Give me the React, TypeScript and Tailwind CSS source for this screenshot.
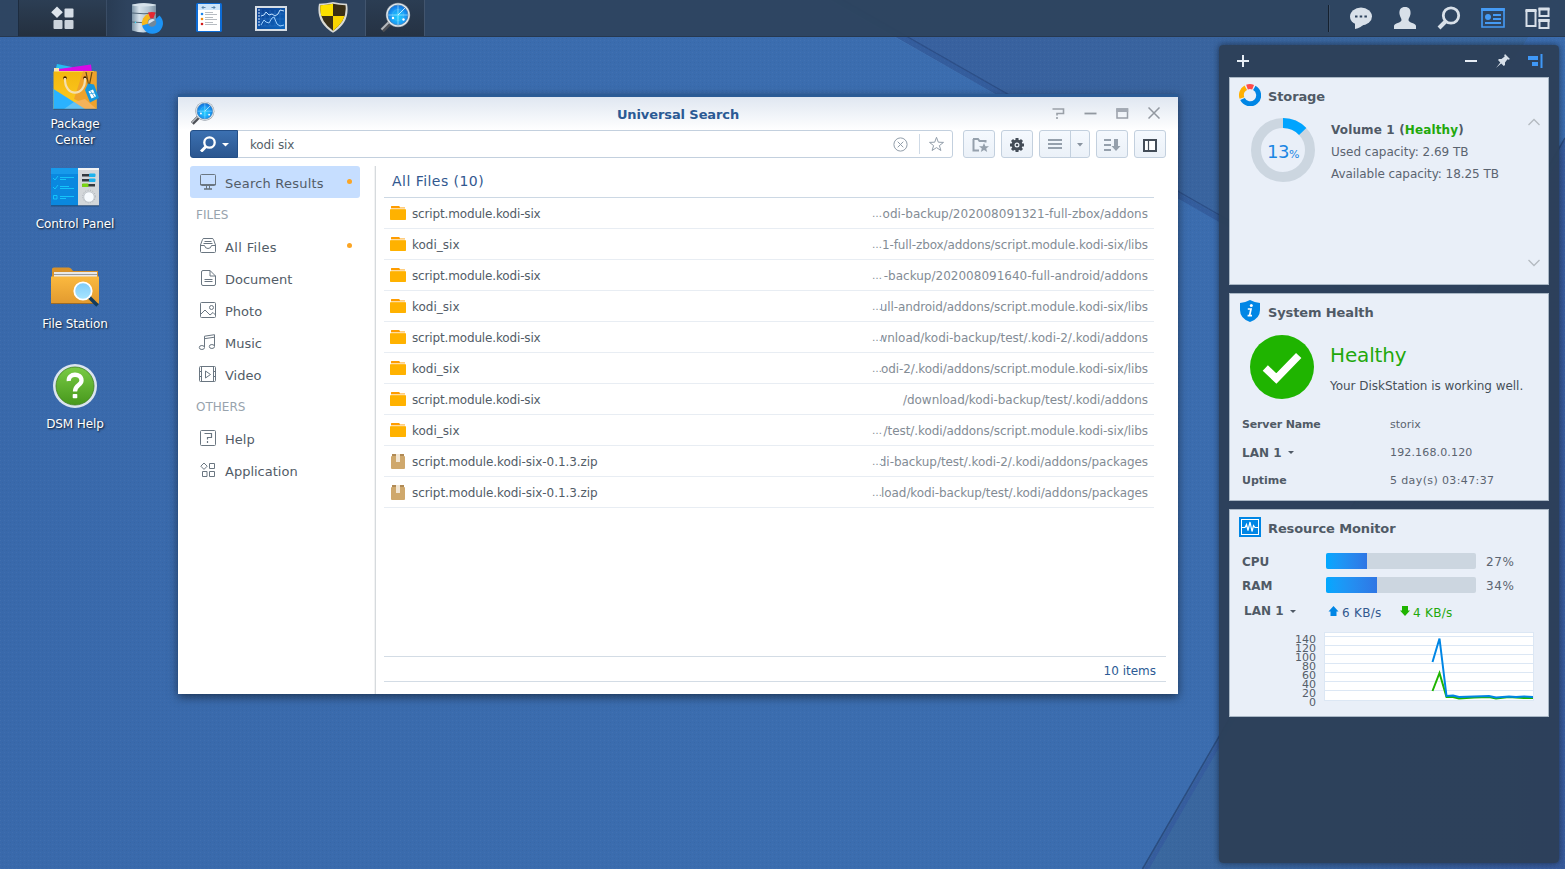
import React from "react";

const FOLDER = "folder";
const ZIP = "zip";

const LIBS = "tracking-[-0.09px]";
const results = [
  { icon: FOLDER, name: "script.module.kodi-six", cut: true, fit: "tracking-[0.02px]", path: "odi-backup/202008091321-full-zbox/addons" },
  { icon: FOLDER, name: "kodi_six", cut: true, fit: "tracking-[-0.11px]", path: "1-full-zbox/addons/script.module.kodi-six/libs" },
  { icon: FOLDER, name: "script.module.kodi-six", cut: true, fit: "tracking-[0.01px]", path: "-backup/202008091640-full-android/addons" },
  { icon: FOLDER, name: "kodi_six", cut: true, fit: LIBS, path: "ull-android/addons/script.module.kodi-six/libs" },
  { icon: FOLDER, name: "script.module.kodi-six", cut: true, fit: "tracking-[-0.03px]", path: "wnload/kodi-backup/test/.kodi-2/.kodi/addons" },
  { icon: FOLDER, name: "kodi_six", cut: true, fit: LIBS, path: "odi-2/.kodi/addons/script.module.kodi-six/libs" },
  { icon: FOLDER, name: "script.module.kodi-six", cut: false, fit: "tracking-[-0.03px]", path: "/download/kodi-backup/test/.kodi/addons" },
  { icon: FOLDER, name: "kodi_six", cut: true, fit: "tracking-[-0.08px]", path: "/test/.kodi/addons/script.module.kodi-six/libs" },
  { icon: ZIP, name: "script.module.kodi-six-0.1.3.zip", cut: true, fit: "tracking-[-0.06px]", path: "di-backup/test/.kodi-2/.kodi/addons/packages" },
  { icon: ZIP, name: "script.module.kodi-six-0.1.3.zip", cut: true, fit: "tracking-[-0.09px]", path: "load/kodi-backup/test/.kodi/addons/packages" },
];

function Wallpaper() {
  return (
    <svg className="absolute inset-0" width="1565" height="869" viewBox="0 0 1565 869">
      <defs>
        <linearGradient id="wpBase" x1="0" y1="0" x2="1" y2="0">
          <stop offset="0" stopColor="#3969ab" />
          <stop offset="0.5" stopColor="#3b6daf" />
          <stop offset="1" stopColor="#3b6cae" />
        </linearGradient>
        <linearGradient id="wpTop" x1="0" y1="0" x2="1" y2="0">
          <stop offset="0" stopColor="#38609f" />
          <stop offset="1" stopColor="#3a689f" />
        </linearGradient>
        <linearGradient id="wpRight" x1="0" y1="0" x2="1" y2="0">
          <stop offset="0" stopColor="#3a689f" />
          <stop offset="1" stopColor="#375a9b" />
        </linearGradient>
        <pattern id="wpDots" width="4" height="4" patternUnits="userSpaceOnUse">
          <rect x="0" y="0" width="1" height="1" fill="#fff" opacity="0.035" />
          <rect x="2" y="2" width="1" height="1" fill="#000" opacity="0.04" />
        </pattern>
      </defs>
      <rect width="1565" height="869" fill="url(#wpBase)" />
      <path d="M838 0 L1360 298 L1565 -20 V0Z" fill="url(#wpTop)" />
      <path d="M1142 869 L1220 735 L1565 138 V869Z" fill="url(#wpRight)" />
      <path d="M830 0 L1350 295" stroke="#4a7ab5" strokeWidth="1" fill="none" opacity=".6" />
      <path d="M831 0 L842 0 L1362 298 L1352 298Z" fill="#345d9d" />
      <path d="M843 0 L1363 297" stroke="#2c4f88" strokeWidth="1.4" fill="none" />
      <path d="M1144 869 L1566 139 L1566 146 L1149 869Z" fill="#365d9e" />
      <path d="M1142.500 869 L1565 138" stroke="#2a4c80" strokeWidth="1.500" fill="none" />
      <rect width="1565" height="869" fill="url(#wpDots)" />
    </svg>
  );
}

/* ---------- application icons ---------- */

function SearchAppIcon({ size, id }: { size: number; id: string }) {
  return (
    <svg width={size} height={size} viewBox="0 0 32 32">
      <defs>
        <radialGradient id={id} cx=".5" cy=".6" r=".6">
          <stop offset="0" stopColor="#1fd0ff" />
          <stop offset=".6" stopColor="#1a9cf5" />
          <stop offset="1" stopColor="#0f6fdd" />
        </radialGradient>
      </defs>
      <path d="M11.500 20 L3 28.500" stroke="#4c4f55" strokeWidth="5" />
      <path d="M10.500 19.500 L2.500 27.500" stroke="#b5b9be" strokeWidth="1.800" />
      <circle cx="19" cy="13" r="12.200" fill="#8d969f" />
      <circle cx="19" cy="13" r="11.600" fill="#e4e8ec" />
      <circle cx="19" cy="13" r="10" fill={`url(#${id})`} stroke="#3c7cae" strokeWidth=".7" />
      <circle cx="19" cy="13" r="5.500" fill="none" stroke="#7fe0ff" strokeWidth=".6" opacity=".4" />
      <path d="M19 3 V23 M9 13 H29" stroke="#c8f4ff" strokeWidth=".9" opacity=".6" />
      <path d="M19 13 L26 6" stroke="#e8fbff" strokeWidth="1" opacity=".8" />
      <circle cx="14" cy="16" r="1.200" fill="#fff" />
      <circle cx="24.500" cy="17.500" r="1.200" fill="#fff" />
    </svg>
  );
}

function StorageManagerIcon() {
  return (
    <svg width="32" height="32" viewBox="0 0 32 32">
      <defs>
        <linearGradient id="cyl" x1="0" x2="1">
          <stop offset="0" stopColor="#7d95a8" />
          <stop offset=".3" stopColor="#d7e3ec" />
          <stop offset=".7" stopColor="#b0c3d1" />
          <stop offset="1" stopColor="#7c91a3" />
        </linearGradient>
      </defs>
      <path d="M1 2.500 Q13 -.5 25 2.500 V28 Q13 32.500 1 28.500Z" fill="url(#cyl)" />
      <ellipse cx="13" cy="3" rx="12" ry="1.500" fill="#d6e2eb" />
      <path d="M1 11 Q13 12.500 25 11 M1 20 Q13 21.500 25 20" stroke="#516779" strokeWidth="1" fill="none" />
      <circle cx="4.500" cy="20.500" r=".7" fill="#3ae2ff" />
      <path d="M21 20.500 L28.500 13.500 A10.500 10.500 0 1 1 11 22Z" fill="#1c93f5" />
      <path d="M21 20.500 L11 23.500 A11 11 0 0 1 17.500 11.500Z" fill="#f6b71d" />
      <path d="M21 20.500 L17 10.500 Q21 9.500 24.500 10.500Z" fill="#e42832" />
      <circle cx="21" cy="20.500" r="4.300" fill="#71889b" />
      <path d="M17.500 22 A4 4 0 0 1 24 18Z" fill="#d7e3ec" />
    </svg>
  );
}

function LogIcon() {
  return (
    <svg width="26" height="30" viewBox="0 0 26 30">
      <rect x="0" y="0" width="26" height="29" rx="1.500" fill="#0d6cd6" />
      <rect x="2" y="1" width="22" height="27" fill="#fff" />
      <rect x="2" y="1" width="22" height="6" fill="#cfe5fa" />
      <path d="M6 4.500 H9.500 M15.500 4.500 H19 M7.500 3 L6 4.500 L7.500 6 M17.500 3 L19 4.500 L17.500 6" stroke="#41729f" strokeWidth=".8" fill="none" />
      <circle cx="6" cy="11" r="1.300" fill="#1a85ee" />
      <circle cx="6" cy="16" r="1.300" fill="#f28c13" />
      <circle cx="6" cy="21" r="1.300" fill="#d31b1b" />
      <path d="M9 9.500 H17 M9 11.500 H21 M9 14.500 H17 M9 16.500 H21 M9 19.500 H17 M9 21.500 H21" stroke="#b7bcc2" />
    </svg>
  );
}

function MonitorIcon() {
  return (
    <svg width="32" height="25" viewBox="0 0 32 25">
      <defs>
        <linearGradient id="mon" x1="0" y1="0" x2="1" y2="1">
          <stop offset="0" stopColor="#0e3f8f" />
          <stop offset="1" stopColor="#0b66bf" />
        </linearGradient>
      </defs>
      <rect width="32" height="25" fill="#d6dde4" />
      <rect x="2" y="2" width="28" height="21" fill="url(#mon)" />
      <path d="M6 3 V20 H29 M10 20 V4 M15 20 V4 M20 20 V4 M25 20 V4 M6 8 H29 M6 13 H29" stroke="#3b7fca" strokeWidth=".7" fill="none" opacity=".6" />
      <path d="M3 4 H5 M3 7 H5 M3 10 H5 M3 13 H5 M3 16 H5 M3 19 H5" stroke="#dcecff" strokeWidth="1" />
      <path d="M6 10 L9 9 L11 6 L14 9 L17 8 L20 10 L23 8 L25 4 L29 5" stroke="#bfe0ff" fill="none" strokeWidth="1" />
      <path d="M6 19 L9 14 L11 16 L14 17 L17 12 L19 11 L22 18 L25 20 L29 19" stroke="#9cd0ff" fill="none" strokeWidth="1" />
    </svg>
  );
}

function ShieldIcon() {
  return (
    <svg width="32" height="31" viewBox="0 0 32 31">
      <defs>
        <clipPath id="sh">
          <path d="M16 1.800 Q22 3 28.500 3.200 Q30.500 18 16 28.800 Q1.500 18 3.500 3.200 Q10 3 16 1.800Z" />
        </clipPath>
      </defs>
      <path d="M16 0 Q23 1.500 30 1.800 Q33.500 20 16 30.800 Q-1.500 20 2 1.800 Q9 1.500 16 0Z" fill="#dadad4" />
      <g clipPath="url(#sh)">
        <rect width="32" height="31" fill="#3a2f16" />
        <rect width="16" height="14" fill="#fce000" />
        <rect x="16" y="14" width="16" height="17" fill="#f9d400" />
      </g>
    </svg>
  );
}

function PackageIcon() {
  return (
    <svg width="48" height="48" viewBox="0 0 48 48" className="relative top-px left-px">
      <defs>
        <linearGradient id="bag" x1="0" y1="0" x2="0" y2="1">
          <stop offset="0" stopColor="#f3b70f" />
          <stop offset="1" stopColor="#fecb22" />
        </linearGradient>
      </defs>
      <path d="M5 0 L20 3 L18 9 L3 8Z" fill="#25bdf0" />
      <path d="M7 5 L39 .5 L40 9 L7 8Z" fill="#d80ae6" />
      <path d="M2 4 H7 V7 H42 V9 H2Z" fill="#f7e5b4" />
      <rect x="1.500" y="7.500" width="43" height="37.500" fill="url(#bag)" />
      <path d="M31 7.500 L22 35 L44.500 45 V7.500Z" fill="#eea22b" />
      <path d="M1.500 25 L33 45 H1.500Z" fill="#2ab2ff" />
      <path d="M22 38 L33 35 L44.500 45 H32Z" fill="#f5b35a" />
      <path d="M22 38 L33 45 H12Z" fill="#63c2f4" />
      <path d="M1.500 45.300 H44.500" stroke="#34597c" strokeWidth="1" />
      <circle cx="13" cy="14" r="1.800" fill="#3a1b00" />
      <circle cx="33" cy="14" r="1.800" fill="#3a1b00" />
      <path d="M13 14 C12 33.500 34 33.500 33 14" fill="none" stroke="#f4dfaf" strokeWidth="2.200" />
      <path d="M34 8 L37 23 L40 8" stroke="#6b4a10" strokeWidth="1.200" fill="none" />
      <path d="M36 19.500 L42 20.500 L47 34 L38 38.500 L33 26Z" fill="#1597dd" />
      <path d="M36.500 27.500 L41 25.500 L44 32.500 L39.500 34.500Z" fill="#fff" />
      <path d="M38.500 27 L42.500 33 M36.500 30 L43 29" stroke="#1597dd" strokeWidth=".7" />
    </svg>
  );
}

function ControlPanelIcon() {
  return (
    <svg width="48" height="39" viewBox="0 0 48 39">
      <rect width="27" height="38" fill="#0a88df" />
      <rect width="27" height="6" fill="#179aeb" />
      <rect x="27" width="21" height="38" fill="#d3d7da" />
      <rect x="27" width="21" height="2" fill="#f2f3f4" />
      <rect y="37" width="48" height="1.500" fill="#214570" opacity=".7" />
      <g stroke="#18d2ff" strokeWidth=".8" fill="none">
        <path d="M2 10 L4 12 L7 8 M9 9.500 H23 M9 11.500 H15 M2 19 L4 21 L7 17 M9 18.500 H18 M9 20.500 H23 M2.500 27.500 H6 V31 H2.500Z M9 28.500 H23 M9 30.500 H15" />
      </g>
      <rect x="31" y="6" width="13" height="2.500" fill="#32393f" />
      <rect x="31" y="11" width="13" height="2.500" fill="#32393f" />
      <rect x="31" y="16" width="13" height="2.500" fill="#32393f" />
      <rect x="38" y="5.500" width="6.500" height="3.500" rx="1" fill="#1bb2ed" />
      <rect x="38" y="10.500" width="6.500" height="3.500" rx="1" fill="#1bb2ed" />
      <rect x="31" y="15.500" width="6.500" height="3.500" rx="1" fill="#79d414" />
      <circle cx="38" cy="28.500" r="6.300" fill="none" stroke="#9ba2a8" strokeWidth=".7" strokeDasharray="1 1.500" />
      <circle cx="38" cy="29" r="5.200" fill="#f7fbfe" stroke="#b6bdc4" strokeWidth=".7" />
    </svg>
  );
}

function FileStationIcon() {
  return (
    <svg width="48" height="42" viewBox="0 0 48 42" className="relative top-px">
      <defs>
        <linearGradient id="fs" x1="0" y1="0" x2="0" y2="1">
          <stop offset="0" stopColor="#fbb93f" />
          <stop offset="1" stopColor="#e29a2f" />
        </linearGradient>
        <linearGradient id="fsl" x1="0" y1="0" x2="0" y2="1">
          <stop offset="0" stopColor="#7fcbf9" />
          <stop offset="1" stopColor="#a8e6ff" />
        </linearGradient>
      </defs>
      <path d="M1 2 Q1 .5 3 .5 H18 Q20 .5 22 4 H47 V14 H1Z" fill="#d8922a" />
      <rect x="3" y="5" width="43" height="6" fill="#e9e9e9" />
      <path d="M3 7.500 H46" stroke="#9c9c9c" />
      <path d="M0 9.500 H48 V36 Q48 37 47 37 H1 Q0 37 0 36Z" fill="url(#fs)" />
      <path d="M0 36.500 H47.500" stroke="#9c6a26" strokeWidth="1" />
      <path d="M38 30 L46.500 38.500" stroke="#123b5c" strokeWidth="3.500" />
      <circle cx="32" cy="24" r="8.700" fill="url(#fsl)" stroke="#fff" strokeWidth="1.800" />
    </svg>
  );
}

function HelpAppIcon() {
  return (
    <svg width="44" height="44" viewBox="0 0 44 44" className="relative -top-px">
      <defs>
        <linearGradient id="hp" x1="0" y1="0" x2="0" y2="1">
          <stop offset="0" stopColor="#79cb45" />
          <stop offset="1" stopColor="#47981c" />
        </linearGradient>
      </defs>
      <circle cx="22" cy="22" r="22" fill="#dbe5ee" />
      <circle cx="22" cy="22" r="19" fill="url(#hp)" stroke="#3f7f1e" strokeWidth=".8" />
      <path d="M15.800 17 C15 9 28.500 8.500 28.500 16.500 C28.500 21.500 22 20.500 22 27.500" fill="none" stroke="#fff" strokeWidth="4.300" />
      <rect x="19.700" y="30" width="4.600" height="4.200" rx=".8" fill="#fff" />
    </svg>
  );
}

/* ---------- task bar ---------- */

function Taskbar() {
  return (
    <header className="relative z-10 flex h-[37px] w-full border-b border-[#263850] bg-[#2d435e]/95">
      <div className="h-full w-[19px] border-r border-[#1d2c3f]" />
      <div className="flex h-full w-[88px] items-center justify-center border-r border-[#3a4d66] bg-gradient-to-b from-[#2c3e54] to-[#24303f]">
        <svg width="24" height="24" viewBox="0 0 24 24">
          <path d="M6 .5 L11.800 6.200 L6 12 L.2 6.200Z" fill="#dde4ec" />
          <rect x="13.500" y="2.500" width="9" height="9" rx="1" fill="#d5dde6" />
          <rect x="2.500" y="14" width="9" height="9" rx="1" fill="#cbd3dc" />
          <rect x="13.500" y="14" width="9" height="9" rx="1" fill="#cbd3dc" />
        </svg>
      </div>
      <div className="flex h-full w-[258px] bg-gradient-to-r from-[#293c54] via-[#2e435e] via-[8%] to-[#2e435e]">
        <div className="flex w-[80px] items-center justify-center"><StorageManagerIcon /></div>
        <div className="flex w-[44px] items-center justify-center"><LogIcon /></div>
        <div className="flex w-[80px] items-center justify-center"><MonitorIcon /></div>
        <div className="flex w-[44px] items-center justify-center pb-px"><ShieldIcon /></div>
      </div>
      <div className="flex h-full w-[60px] items-center justify-center border-x border-x-[#42556e] bg-gradient-to-b from-[#2b3d53] to-[#253243]">
        <SearchAppIcon size={32} id="sa1" />
      </div>
      <div className="ml-auto flex items-center">
        <div className="mr-[19px] h-[27px] w-0.5 border-r border-[#3d526c] bg-[#15202e]" />
        <div className="flex items-center gap-5">
          <svg width="24" height="24" viewBox="0 0 24 24">
            <ellipse cx="12" cy="10.500" rx="11" ry="9" fill="#d8e0e9" />
            <path d="M6 17 V23 Q12 22 16 17Z" fill="#d8e0e9" />
            <path d="M6 9.500h2.500v2H6zM10.700 9.500h2.500v2h-2.500zM15.400 9.500h2.500v2h-2.500z" fill="#2e435e" />
          </svg>
          <svg width="24" height="24" viewBox="0 0 24 24">
            <path d="M12 1 C16 1 18 3.500 17.500 8 C17 11 15.500 12.500 15.500 14 C15.500 17 23 17 23 20 V23 H1 V20 C1 17 8.500 17 8.500 14 C8.500 12.500 7 11 6.500 8 C6 3.500 8 1 12 1Z" fill="#d8e0e9" />
          </svg>
          <svg width="24" height="24" viewBox="0 0 24 24">
            <circle cx="14" cy="9.500" r="7.700" fill="none" stroke="#d8e0e9" strokeWidth="2.800" />
            <path d="M9 15 L2 22" stroke="#d8e0e9" strokeWidth="4" />
          </svg>
          <svg width="24" height="24" viewBox="0 0 24 24">
            <path d="M1 3 H23 V21 H1Z" fill="none" stroke="#459bf5" strokeWidth="1.600" />
            <path d="M.2 2 H23.800 V5 H.2Z" fill="#459bf5" />
            <circle cx="7" cy="11" r="3" fill="#459bf5" />
            <path d="M12 9 H20 M12 13 H20 M4 17 H20" stroke="#459bf5" strokeWidth="2" />
          </svg>
          <svg width="25" height="24" viewBox="0 0 25 24">
            <path d="M1.500 5 H10.500 V20 H1.500Z" fill="none" stroke="#d8e0e9" strokeWidth="2" />
            <path d="M.5 3 H11.500 V6 H.5Z M13.500 1.500 H24.500 V4.500 H13.500Z M13.500 13 H24.500 V16 H13.500Z" fill="#d8e0e9" />
            <path d="M14.500 3 H23.500 V10 H14.500Z M14.500 14 H23.500 V22 H14.500Z" fill="none" stroke="#d8e0e9" strokeWidth="2" />
          </svg>
          <span className="-ml-[5px] w-0" />
        </div>
      </div>
    </header>
  );
}

/* ---------- desktop ---------- */

function Shortcut({ icon, label }: { icon: React.ReactNode; label: string }) {
  return (
    <div className="flex h-[100px] w-[100px] flex-col items-center">
      <div className="flex h-[54px] items-center justify-center">{icon}</div>
      <div className="mt-0.5 w-[84px] text-center text-[12px] leading-4 tracking-[-0.08px] text-white [text-shadow:1px_1px_2px_rgba(0,0,0,0.8)]">
        {label}
      </div>
    </div>
  );
}

/* ---------- search window ---------- */

const line = { fill: "none", stroke: "#6a7681", strokeWidth: 1 } as const;

const navIcons: Record<string, React.ReactNode> = {
  results: <g {...line}><rect x=".5" y=".5" width="15" height="11" rx="1" /><path d="M0 10.500 H16" /><path d="M4 15 H12" strokeWidth="1.600" /><path d="M6.500 12 V15 M9.500 12 V15" /></g>,
  all: <g {...line}><path d="M.5 7 L2.500 1.500 Q2.700 .5 4 .5 H12 Q13.300 .5 13.500 1.500 L15.500 7 V13.500 Q15.500 14.500 14.500 14.500 H1.500 Q.5 14.500 .5 13.500Z M.5 7.500 H4.500 Q5 10.500 8 10.500 Q11 10.500 11.500 7.500 H15.500 M4.500 3.500 H11.500 M3.500 5.500 H12.500" /></g>,
  doc: <g {...line}><path d="M3 .5 H10 L15.500 6 V14 Q15.500 15.500 14 15.500 H3 Q1.500 15.500 1.500 14 V2 Q1.500 .5 3 .5Z M10 .5 V6 H15.500 M4.500 9.500 H12.500 M4.500 11.500 H12.500" /></g>,
  photo: <g {...line}><rect x=".5" y=".5" width="15" height="15" rx="1" /><circle cx="11.500" cy="5.500" r="2" /><path d="M.5 12.500 L5 8 L10 13 L13 10.500 L15.500 13" /></g>,
  music: <g {...line}><path d="M4.500 13 V2.200 L14.500 .7 V12 M4.500 4.700 L14.500 3.200" /><ellipse cx="1.900" cy="13.500" rx="2.600" ry="2" /><ellipse cx="11.900" cy="12.500" rx="2.600" ry="2" /></g>,
  video: <g {...line}><rect x="-.5" y=".5" width="16" height="15" rx="1" /><path d="M1.500 .5 V15.500 M13.500 .5 V15.500 M-.5 5.500 H1.500 M-.5 10.500 H1.500 M13.500 5.500 H15.500 M13.500 10.500 H15.500 M5.500 5 L10.500 8.500 L5.500 12Z" /></g>,
  help: <g {...line}><rect x=".5" y=".5" width="15" height="15" rx="1" /><path d="M4.500 3.500 H11.500 V7.500 H7.500 V9.500 M7.500 11 V13" strokeWidth="1.200" /></g>,
  app: <g {...line}><path d="M4 1 L7.200 4.200 L4 7.400 L.8 4.200Z M9.500 1.500 H14.500 V6.500 H9.500Z M2.500 9.500 H7 V14.500 H2.500Z M9.500 9.500 H14.500 V14.500 H9.500Z" /></g>,
};

function NavItem({ icon, label, active, dot }: { icon: string; label: string; active?: boolean; dot?: boolean }) {
  return (
    <div className={active ? "flex h-8 items-center rounded-[3px] bg-[#c6deff] pr-2 pl-2.5" : "flex h-8 items-center pr-2 pl-2.5"}>
      <svg width="16" height="16" viewBox="0 0 16 16" className="shrink-0 overflow-visible">{navIcons[icon]}</svg>
      <span className={active ? "mt-1 ml-[9px] text-[13px] tracking-[0.22px] text-[#525c67]" : icon === "all" ? "mt-1 ml-[9px] text-[13px] tracking-[0.35px] text-[#525c67]" : "mt-1 ml-[9px] text-[13px] text-[#525c67]"}>{label}</span>
      {dot && <span className="mb-0.5 ml-auto h-[5px] w-[5px] rounded-full bg-[#fba524]" />}
    </div>
  );
}

function NavHeading({ label }: { label: string }) {
  return <div className="flex h-8 items-center pl-1.5 text-[12px] text-[#98a3ad]"><span className="mt-px">{label}</span></div>;
}

function ToolButton({ children }: { children: React.ReactNode }) {
  return (
    <div className="flex h-7 w-8 items-center justify-center rounded-[3px] border border-[#c3d0de] bg-gradient-to-b from-[#f5f9fe] to-[#ebf1f8]">
      {children}
    </div>
  );
}

function FileIcon({ kind }: { kind: string }) {
  if (kind === ZIP) {
    return (
      <svg width="16" height="16" viewBox="0 0 16 16">
        <path d="M2 1 H14 V3 H2Z" fill="#b08a55" />
        <rect x="1" y="3" width="14" height="13" rx="1" fill="#cfa86c" />
        <rect x="6" y="1" width="4" height="8" fill="#f2e6d3" />
      </svg>
    );
  }
  return (
    <svg width="16" height="16" viewBox="0 0 16 16">
      <path d="M1 1.500 Q1 1 1.500 1 H9 Q9.800 1 10 2.500 H15 V4 H1Z" fill="#ff9d00" />
      <rect x="0" y="4" width="16" height="11" rx=".7" fill="#ffb200" />
      <path d="M0 3.700 H16" stroke="#fff" strokeWidth=".8" />
    </svg>
  );
}

function SearchWindow() {
  return (
    <section className="absolute top-[94px] left-[178px] flex h-[600px] w-[1000px] flex-col border-t-[3px] border-[#2b5b95] bg-white shadow-[0_3px_9px_rgba(0,0,0,0.5)]">
      <div className="flex h-[33px] shrink-0 items-center bg-gradient-to-b from-[#e0e7f1] to-white pr-[17px] pl-3">
        <div className="w-[109px]"><SearchAppIcon size={25} id="sa2" /></div>
        <h1 className="flex-1 pt-0.5 pl-[5px] text-center text-[13px] font-bold tracking-[-0.1px] text-[#2b5a94]">Universal Search</h1>
        <div className="flex w-[109px] items-center justify-between pb-px">
          <svg width="13" height="11" viewBox="0 0 13 11"><path d="M.5 1 H11.500 V5.500 H5 V7.500 M5 9 V11" stroke="#9aa0a8" strokeWidth="1.600" fill="none" /></svg>
          <svg width="13" height="11" viewBox="0 0 13 11"><path d="M.5 5.500 H12.500" stroke="#9298a0" strokeWidth="1.800" /></svg>
          <svg width="13" height="11" viewBox="0 0 13 11"><path d="M1 1 H11.500 V10 H1Z" stroke="#999fa8" strokeWidth="1.500" fill="none" /><path d="M.3 .3 H12.200 V4 H.3Z" fill="#a3a9b3" /></svg>
          <svg width="13" height="12" viewBox="0 0 13 12"><path d="M.5 .5 L11.500 11.500 M11.500 .5 L.5 11.500" stroke="#9298a0" strokeWidth="1.500" /></svg>
        </div>
      </div>

      <div className="flex h-7 shrink-0 gap-1.5 px-3">
        <div className="mr-1 flex w-[763px] items-center rounded-[3px] border border-[#c3d0de] bg-white">
          <div className="-my-px -ml-px flex h-7 w-12 items-center gap-1.5 rounded-l-[3px] border border-[#234f88] bg-gradient-to-b from-[#3b70b1] to-[#2b568f] pl-[9px]">
            <svg width="16" height="16" viewBox="0 0 16 16"><circle cx="9.500" cy="6.500" r="5.200" fill="none" stroke="#fff" strokeWidth="2.300" /><path d="M6 10.500 L1 15.500" stroke="#fff" strokeWidth="3" /></svg>
            <svg width="7" height="4" viewBox="0 0 7 4" className="mt-0.5"><path d="M0 0 H7 L3.500 3.500Z" fill="#fff" /></svg>
          </div>
          <span className="mt-0.5 ml-3 flex-1 text-[12px] tracking-[-0.15px] text-[#555f69]">kodi six</span>
          <svg width="15" height="15" viewBox="0 0 15 15" className="shrink-0"><circle cx="7.500" cy="7.500" r="6.600" fill="none" stroke="#929eaa" /><path d="M4.700 4.700 L10.300 10.300 M10.300 4.700 L4.700 10.300" stroke="#929eaa" /></svg>
          <div className="mr-2 ml-[11px] h-5 w-px bg-[#cfdae6]" />
          <svg width="17" height="16" viewBox="0 0 17 16" className="mr-[7px]"><path d="M8.500 1.300 L10.300 6.200 L15.500 6.400 L11.400 9.600 L12.900 14.500 L8.500 11.600 L4.100 14.500 L5.600 9.600 L1.500 6.400 L6.700 6.200Z" fill="none" stroke="#929eaa" /></svg>
        </div>
        <ToolButton>
          <svg width="17" height="15" viewBox="0 0 17 15" className="relative top-px left-px"><path d="M1 1 H6 L7.500 3 H13.500 V4.500 M1.500 1 V12.500 H7" fill="none" stroke="#95a0ac" strokeWidth="2" /><path d="M12 5 L13.400 8.200 L17 8.300 L14.200 10.500 L15.200 14 L12 12 L8.800 14 L9.800 10.500 L7 8.300 L10.600 8.200Z" fill="#95a0ac" /></svg>
        </ToolButton>
        <ToolButton>
          <svg width="14" height="14" viewBox="0 0 14 14" className="mt-0.5"><circle cx="7" cy="7" r="4" fill="none" stroke="#434c57" strokeWidth="3" /><path d="M7 0 V3 M7 11 V14 M0 7 H3 M11 7 H14 M2 2 L4 4 M10 10 L12 12 M12 2 L10 4 M4 10 L2 12" stroke="#434c57" strokeWidth="3" /><circle cx="7" cy="7" r="1.300" fill="#434c57" /></svg>
        </ToolButton>
        <div className="flex h-7 w-[51px] items-center rounded-[3px] border border-[#c3d0de] bg-gradient-to-b from-[#f5f9fe] to-[#ebf1f8]">
          <div className="flex h-full w-[31px] items-center justify-center border-r border-[#c3d0de]">
            <svg width="14" height="12" viewBox="0 0 14 12"><path d="M0 2 H14 M0 6 H14 M0 10 H14" stroke="#95a0ac" strokeWidth="1.800" /></svg>
          </div>
          <div className="flex flex-1 items-center justify-center pt-0.5">
            <svg width="6" height="4" viewBox="0 0 6 4"><path d="M0 0 H6 L3 3.500Z" fill="#8994a0" /></svg>
          </div>
        </div>
        <ToolButton>
          <svg width="17" height="14" viewBox="0 0 17 14" className="relative top-px"><path d="M0 2 H7 M0 7 H7 M0 12 H7" stroke="#95a0ac" strokeWidth="1.800" /><path d="M10 1 H14 V8 H16.500 L12 13 L7.500 8 H10Z" fill="#95a0ac" /></svg>
        </ToolButton>
        <ToolButton>
          <svg width="14" height="13" viewBox="0 0 14 13" className="mt-[3px]"><rect x="1" y="1" width="12" height="11" fill="#fff" stroke="#434c57" strokeWidth="2" /><path d="M5.500 1 V12" stroke="#434c57" strokeWidth="1.200" /></svg>
        </ToolButton>
      </div>

      <div className="mt-2 flex min-h-0 flex-1">
        <nav className="ml-3 w-[170px] shrink-0">
          <NavItem icon="results" label="Search Results" active dot />
          <NavHeading label="FILES" />
          <NavItem icon="all" label="All Files" dot />
          <NavItem icon="doc" label="Document" />
          <NavItem icon="photo" label="Photo" />
          <NavItem icon="music" label="Music" />
          <NavItem icon="video" label="Video" />
          <NavHeading label="OTHERS" />
          <NavItem icon="help" label="Help" />
          <NavItem icon="app" label="Application" />
        </nav>
        <div className="ml-[14px] w-0.5 border-r border-[#d6dadd] bg-[#f2f3f4]" />
        <div className="ml-2 flex flex-1 flex-col pr-3 pb-3">
          <div className="w-[770px]">
            <h2 className="flex h-8 items-center border-b border-[#ccd8e4] pl-2 text-[14px] font-normal tracking-[0.46px] text-[#32588f]">All Files (10)</h2>
            {results.map((r, i) => (
              <div key={i} className="flex h-[31px] items-center border-b border-[#e8edf3] pr-1.5 pl-1.5">
                <FileIcon kind={r.icon} />
                <span className={r.name === "kodi_six" ? "mt-px ml-1.5 flex-1 text-[12px] text-[#525c67]" : r.icon === ZIP ? "mt-px ml-1.5 flex-1 text-[12px] tracking-[-0.07px] text-[#525c67]" : "mt-px ml-1.5 flex-1 text-[12px] tracking-[-0.15px] text-[#525c67]"}>{r.name}</span>
                <div className="mt-px flex w-[276px] text-[12px] whitespace-nowrap text-[#838c95]">
                  {r.cut && <span className="w-[9px] shrink-0 text-[10px] leading-[18px] tracking-[-1px]">…</span>}
                  <span className="flex min-w-0 flex-1 justify-end overflow-hidden">
                    <span className={`shrink-0 ${r.fit}`}>{r.path}</span>
                  </span>
                </div>
              </div>
            ))}
          </div>
          <footer className="mt-auto flex h-[26px] items-center justify-end border-y border-[#d3dce5] pt-1 pr-2.5 text-[12px] text-[#2b5a94]">10 items</footer>
        </div>
      </div>
    </section>
  );
}

/* ---------- widget panel ---------- */

function Widget({ icon, title, children }: { icon: React.ReactNode; title: string; children: React.ReactNode }) {
  return (
    <section className="h-[208px] border border-[#a9b7c5] bg-[#e9eff8]">
      <div className="flex h-[35px] items-center pl-[9px]">
        <div className="mb-0.5">{icon}</div>
        <h2 className="mt-[3px] ml-[7px] text-[13px] font-bold tracking-[-0.12px] text-[#505a66]">{title}</h2>
      </div>
      {children}
    </section>
  );
}

function StorageWidget() {
  return (
    <Widget
      title="Storage"
      icon={
        <svg width="22" height="22" viewBox="0 0 22 22" fill="none" strokeWidth="5">
          <path d="M15.300 3.900 A8.500 8.500 0 1 1 3.500 15" stroke="#0086e5" />
          <path d="M3 14 A8.500 8.500 0 0 1 6.800 3.700" stroke="#ffb000" />
          <path d="M8 3.100 A8.500 8.500 0 0 1 14.100 3.200" stroke="#ff4b4b" />
        </svg>
      }
    >
      <div className="flex">
        <div className="mt-[5px] ml-[21px] grid h-16 w-16 place-items-center">
          <svg width="64" height="64" viewBox="0 0 64 64" fill="none" strokeWidth="10" className="col-start-1 row-start-1">
            <circle cx="32" cy="32" r="27" stroke="#ccd6e0" />
            <path d="M32 5 A27 27 0 0 1 51.700 13.500" stroke="#00a4ff" />
          </svg>
          <div className="col-start-1 row-start-1 pt-0.5 text-[18px] tracking-[-0.5px] text-[#1b86e3]">13<span className="text-[11px]">%</span></div>
        </div>
        <div className="mt-1.5 ml-4 text-[12px] leading-[22px] text-[#5b6470]">
          <div className="font-bold tracking-[0.14px] text-[#505a66]">Volume 1 (<span className="text-[#22a80b]">Healthy</span>)</div>
          <div>Used capacity: 2.69 TB</div>
          <div className="tracking-[-0.06px]">Available capacity: 18.25 TB</div>
        </div>
        <div className="mt-[5px] mr-2 ml-auto flex h-[149px] flex-col justify-between">
          <svg width="12" height="8" viewBox="0 0 12 8"><path d="M.5 7 L6 1.500 L11.500 7" stroke="#b4bac1" strokeWidth="1.300" fill="none" /></svg>
          <svg width="12" height="8" viewBox="0 0 12 8"><path d="M.5 1 L6 6.500 L11.500 1" stroke="#b4bac1" strokeWidth="1.300" fill="none" /></svg>
        </div>
      </div>
    </Widget>
  );
}

function Caret() {
  return <svg width="6" height="3" viewBox="0 0 6 3" className="ml-1.5"><path d="M0 0 H6 L3 3Z" fill="#505a66" /></svg>;
}

function HealthWidget() {
  return (
    <Widget
      title="System Health"
      icon={
        <svg width="22" height="22" viewBox="0 0 22 22">
          <path d="M11 0 Q15.500 2.500 21 3 V10 Q21 18.500 11 22 Q1 18.500 1 10 V3 Q6.500 2.500 11 0Z" fill="#0086e5" />
          <path d="M8.800 9 H12 L10.600 15.500 M8.600 15.700 H13" stroke="#fff" strokeWidth="1.700" fill="none" />
          <circle cx="12.300" cy="5.600" r="1.500" fill="#fff" />
        </svg>
      }
    >
      <div className="flex">
        <svg width="64" height="64" viewBox="0 0 64 64" className="mt-1.5 ml-5">
          <circle cx="32" cy="32" r="32" fill="#1fb400" />
          <path d="M15.300 33 L26.300 43.500 L48.700 20.500" fill="none" stroke="#fff" strokeWidth="7.500" />
        </svg>
        <div className="ml-4 whitespace-nowrap">
          <div className="mt-[13px] text-[20px] leading-[26px] tracking-[-0.15px] text-[#1fa80b]">Healthy</div>
          <div className="mt-2 text-[12px] leading-5 tracking-[-0.03px] text-[#474f58]">Your DiskStation is working well.</div>
        </div>
      </div>
      <div className="mt-3 grid grid-cols-[148px_1fr] pl-3 text-[11px] leading-7 text-[#5b6470]">
        <b className="tracking-[-0.15px] text-[#505a66]">Server Name</b><span>storix</span>
        <b className="-mt-px flex items-center text-[12px] text-[#505a66]">LAN 1<Caret /></b><span className="tracking-[0.15px]">192.168.0.120</span>
        <b className="text-[#505a66]">Uptime</b><span className="tracking-[0.38px]">5 day(s) 03:47:37</span>
      </div>
    </Widget>
  );
}

function Usage({ label, value }: { label: string; value: number }) {
  return (
    <div className="flex h-6 items-center pl-3 text-[12px] text-[#5b6470]">
      <b className="w-[84px] pt-0.5 text-[#505a66]">{label}</b>
      <div className="h-4 w-[150px] overflow-hidden rounded-[2px] bg-[#ccd6e0]">
        <div className="h-full bg-gradient-to-r from-[#00a8ff] to-[#2f76e4]" style={{ width: `${value}%` }} />
      </div>
      <span className="ml-2.5 pt-0.5 tracking-[0.6px]">{value}%</span>
    </div>
  );
}

function ResourceWidget() {
  const blue = "108.500,30 115.500,6.500 122.500,64 129,63.500 135,65 150,64.500 165,64 172,65.500 185,64.500 192,65 200,64.500 209,65";
  const green = "108.500,59 115.500,41 122.500,65 129,65 135,66.500 150,65.500 165,65 172,66.500 185,65 192,65.500 200,66 209,66";
  return (
    <Widget
      title="Resource Monitor"
      icon={
        <svg width="22" height="20" viewBox="0 0 22 20">
          <rect width="22" height="20" fill="#0086e5" />
          <rect x="2.500" y="2.500" width="17" height="15" fill="none" stroke="#fff" />
          <path d="M3 10.500 H6 L7.500 7.500 L9 13.500 L11 5 L13 14.500 L14.500 8.500 L16 10.500 H19" fill="none" stroke="#fff" strokeWidth="1.200" />
        </svg>
      }
    >
      <div className="h-1" />
      <Usage label="CPU" value={27} />
      <Usage label="RAM" value={34} />
      <div className="mt-px flex h-[26px] items-center pl-[14px] text-[12px]">
        <b className="flex w-[84px] items-center text-[#505a66]">LAN 1<Caret /></b>
        <svg width="10" height="10" viewBox="0 0 10 10" className="overflow-visible"><path d="M5.500 0 L10.500 5.500 H8.500 V10 H2.500 V5.500 H.5Z" fill="#0086e5" /></svg>
        <span className="mt-[3px] ml-[4px] w-[58px] tracking-[0.3px] text-[#32588f]">6 KB/s</span>
        <svg width="10" height="10" viewBox="0 0 10 10" className="overflow-visible"><path d="M5 10 L10 4.500 H8 V0 H2 V4.500 H0Z" fill="#1fb400" /></svg>
        <span className="mt-[3px] ml-[3px] tracking-[0.3px] text-[#22a80b]">4 KB/s</span>
      </div>
      <div className="mt-2 flex">
        <div className="mt-[3px] w-[86px] text-right text-[11px] leading-[9px] text-[#555e69]">
          {[140, 120, 100, 80, 60, 40, 20, 0].map((n) => <div key={n}>{n}</div>)}
        </div>
        <svg width="210" height="69" viewBox="0 0 210 69" className="ml-2">
          <rect x=".5" y=".5" width="209" height="68" fill="#fff" stroke="#dce7f4" />
          <path d="M0 4.500 H209 M0 13.500 H209 M0 22.500 H209 M0 31.500 H209 M0 40.500 H209 M0 49.500 H209 M0 58.500 H209" stroke="#dce7f4" />
          <polyline points={green} fill="none" stroke="#1fb400" strokeWidth="2" />
          <polyline points={blue} fill="none" stroke="#0086e5" strokeWidth="2" />
        </svg>
      </div>
    </Widget>
  );
}

function WidgetPanel() {
  return (
    <aside className="mt-2 mr-1.5 ml-auto h-[818px] w-[340px] rounded-[4px] bg-[#2c3f57]/95 px-2.5 shadow-[0_0_6px_rgba(0,0,0,0.5)]">
      <div className="flex h-8 items-center pr-1.5 pl-2">
        <svg width="12" height="12" viewBox="0 0 12 12"><path d="M6 0 V12 M0 6 H12" stroke="#e6edf5" strokeWidth="2" /></svg>
        <svg width="12" height="12" viewBox="0 0 12 12" className="ml-auto"><path d="M0 6 H12" stroke="#e6edf5" strokeWidth="2" /></svg>
        <svg width="14" height="14" viewBox="0 0 14 14" className="ml-[19px]"><path d="M9 0 L14 5 L12.500 5.800 L11.500 5.300 L9 8.500 L9 11 L7.800 12 L5.200 9.400 L0 14 L4.300 8.500 L2 6 L3 5 L5.500 5 L8.700 2.500 L8.200 1.500Z" fill="#d8e0e9" /></svg>
        <svg width="15" height="14" viewBox="0 0 15 14" className="ml-[18px]"><path d="M0 2 H10 V6 H0Z M4 8 H10 V12 H4Z M12.500 0 H14.500 V14 H12.500Z" fill="#3f98f7" /></svg>
      </div>
      <div className="flex flex-col gap-2">
        <StorageWidget />
        <HealthWidget />
        <ResourceWidget />
      </div>
    </aside>
  );
}

export default function App() {
  return (
    <div className="relative flex h-[869px] w-[1565px] flex-col overflow-hidden bg-[#3b6cae] font-['DejaVu_Sans','Liberation_Sans',sans-serif]">
      <Wallpaper />
      <Taskbar />
      <main className="relative flex flex-1">
        <div className="flex flex-col pt-[23px] pl-[25px]">
          <Shortcut icon={<PackageIcon />} label="Package Center" />
          <Shortcut icon={<ControlPanelIcon />} label="Control Panel" />
          <Shortcut icon={<FileStationIcon />} label="File Station" />
          <Shortcut icon={<HelpAppIcon />} label="DSM Help" />
        </div>
        <WidgetPanel />
      </main>
      <SearchWindow />
    </div>
  );
}
